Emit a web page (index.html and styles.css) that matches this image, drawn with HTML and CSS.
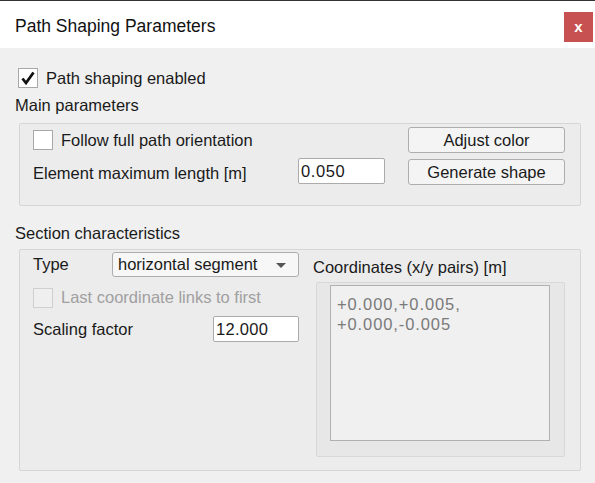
FILE: index.html
```html
<!DOCTYPE html>
<html>
<head>
<meta charset="utf-8">
<link rel="stylesheet" href="styles.css">
</head>
<body>
<div class="window">
  <header class="titlebar">
    <span class="title">Path Shaping Parameters</span>
    <button class="close">x</button>
  </header>
  <main class="content">
    <label class="check-row top-check">
      <span class="checkbox"><svg width="18" height="18" viewBox="0 0 18 18"><path d="M3.5 9.5 L7 14 L14.5 3.5" fill="none" stroke="#111" stroke-width="2.8"/></svg></span>
      <span class="check-text">Path shaping enabled</span>
    </label>
    <div class="section-label">Main parameters</div>
    <section class="group main-group">
      <div class="row row1">
        <label class="check-row">
          <span class="checkbox"></span>
          <span>Follow full path orientation</span>
        </label>
        <button class="btn">Adjust color</button>
      </div>
      <div class="row row2">
        <span class="label">Element maximum length [m]</span>
        <span class="input len-input">0.050</span>
        <button class="btn btn2">Generate shape</button>
      </div>
    </section>
    <div class="section-label sec2">Section characteristics</div>
    <section class="group section-group">
      <div class="left-col">
        <div class="type-row">
          <span class="label">Type</span>
          <span class="dropdown">horizontal segment<span class="arrow"></span></span>
        </div>
        <label class="check-row disabled">
          <span class="checkbox"></span>
          <span>Last coordinate links to first</span>
        </label>
        <div class="scale-row">
          <span class="label">Scaling factor</span>
          <span class="input scale-input">12.000</span>
        </div>
      </div>
      <div class="right-col">
        <div class="coord-label">Coordinates (x/y pairs) [m]</div>
        <div class="coord-box">
          <div class="textarea">+0.000,+0.005,<br>+0.000,-0.005</div>
        </div>
      </div>
    </section>
  </main>
</div>
</body>
</html>
```
FILE: styles.css
```css
html, body {
  margin: 0;
  padding: 0;
}
body {
  font-family: "Liberation Sans", Arial, sans-serif;
  font-size: 16.5px;
  color: #1a1a1a;
  background: #f0f0f0;
}
.window {
  width: 595px;
  height: 483px;
  overflow: hidden;
  background: #f0f0f0;
}
.titlebar {
  height: 47px;
  border-top: 1px solid #333;
  background: #fff;
  display: flex;
  align-items: flex-start;
  justify-content: space-between;
}
.title {
  font-size: 17.5px;
  line-height: 20px;
  margin: 15px 0 0 15px;
  color: #111;
}
.close {
  width: 29px;
  height: 30px;
  margin: 11px 2px 0 0;
  padding: 0;
  border: none;
  background: #c75050;
  color: #fff;
  font-family: "Liberation Sans", Arial, sans-serif;
  font-weight: bold;
  font-size: 15px;
  line-height: 28px;
}
.content {
  padding: 19px 14px 0 15px;
}
.check-row {
  display: flex;
  align-items: center;
  gap: 8px;
  height: 21px;
}
.checkbox {
  width: 20px;
  height: 20px;
  box-sizing: border-box;
  border: 1px solid #a8a8a8;
  background: #fff;
  display: flex;
  align-items: center;
  justify-content: center;
  flex: none;
}
.top-check {
  margin-left: 3px;
}
.check-text {
  padding-top: 2px;
}
.section-label {
  line-height: 20px;
  margin-top: 7px;
}
.group {
  box-sizing: border-box;
  margin-left: 4px;
  border: 1px solid #d6d6d6;
  border-radius: 2px;
  background: #ececec;
}
.main-group {
  margin-top: 8px;
  height: 83px;
  padding: 0 15px 0 13px;
}
.row {
  display: flex;
}
.row1 {
  margin-top: 3px;
  height: 26px;
  align-items: center;
  justify-content: space-between;
}
.row2 {
  margin-top: 5px;
  height: 27px;
  align-items: flex-start;
}
.row2 .label {
  line-height: 26px;
  margin-top: 2px;
}
.btn {
  width: 157px;
  height: 26px;
  box-sizing: border-box;
  border: 1px solid #adadad;
  border-radius: 3px;
  background: #f4f4f4;
  font-family: "Liberation Sans", Arial, sans-serif;
  font-size: 16.5px;
  color: #1a1a1a;
  padding: 0;
}
.btn2 {
  margin-left: 23px;
  margin-top: 1px;
}
.input {
  box-sizing: border-box;
  height: 26px;
  border: 1px solid #ababab;
  border-radius: 2px;
  background: #fff;
  line-height: 24px;
  padding-left: 2px;
  letter-spacing: 0.6px;
}
.len-input {
  width: 87px;
  margin-left: auto;
}
.sec2 {
  margin-top: 17px;
}
.section-group {
  margin-top: 6px;
  height: 222px;
  display: flex;
  padding: 2px 15px 0 13px;
}
.left-col {
  width: 266px;
  flex: none;
}
.type-row {
  display: flex;
  align-items: center;
  justify-content: space-between;
  height: 25px;
}
.dropdown {
  position: relative;
  box-sizing: border-box;
  width: 187px;
  height: 25px;
  border: 1px solid #adadad;
  border-radius: 3px;
  background: #f7f7f7;
  line-height: 23px;
  padding-left: 5px;
}
.arrow {
  position: absolute;
  right: 12px;
  top: 10px;
  width: 0;
  height: 0;
  border-left: 5px solid transparent;
  border-right: 5px solid transparent;
  border-top: 5px solid #555;
}
.disabled {
  margin-top: 10px;
  color: #a0a0a0;
}
.disabled .checkbox {
  background: #efefef;
  border-color: #cfcfcf;
}
.scale-row {
  margin-top: 8px;
  display: flex;
  align-items: center;
  justify-content: space-between;
  height: 26px;
}
.scale-input {
  width: 86px;
  letter-spacing: 0.3px;
}
.right-col {
  flex: 1;
  margin-left: 14px;
}
.coord-label {
  margin-top: 5px;
  line-height: 20px;
}
.coord-box {
  box-sizing: border-box;
  margin: 5px 0 0 3px;
  height: 175px;
  border: 1px solid #d8d8d8;
  border-radius: 2px;
  background: #e7e7e7;
  padding: 2px 14px 0 13px;
}
.textarea {
  box-sizing: border-box;
  height: 156px;
  border: 1px solid #b0b0b0;
  background: #f0f0f0;
  padding: 8px 6px;
  color: #7a7a7a;
  line-height: 20px;
  letter-spacing: 0.9px;
}
```
